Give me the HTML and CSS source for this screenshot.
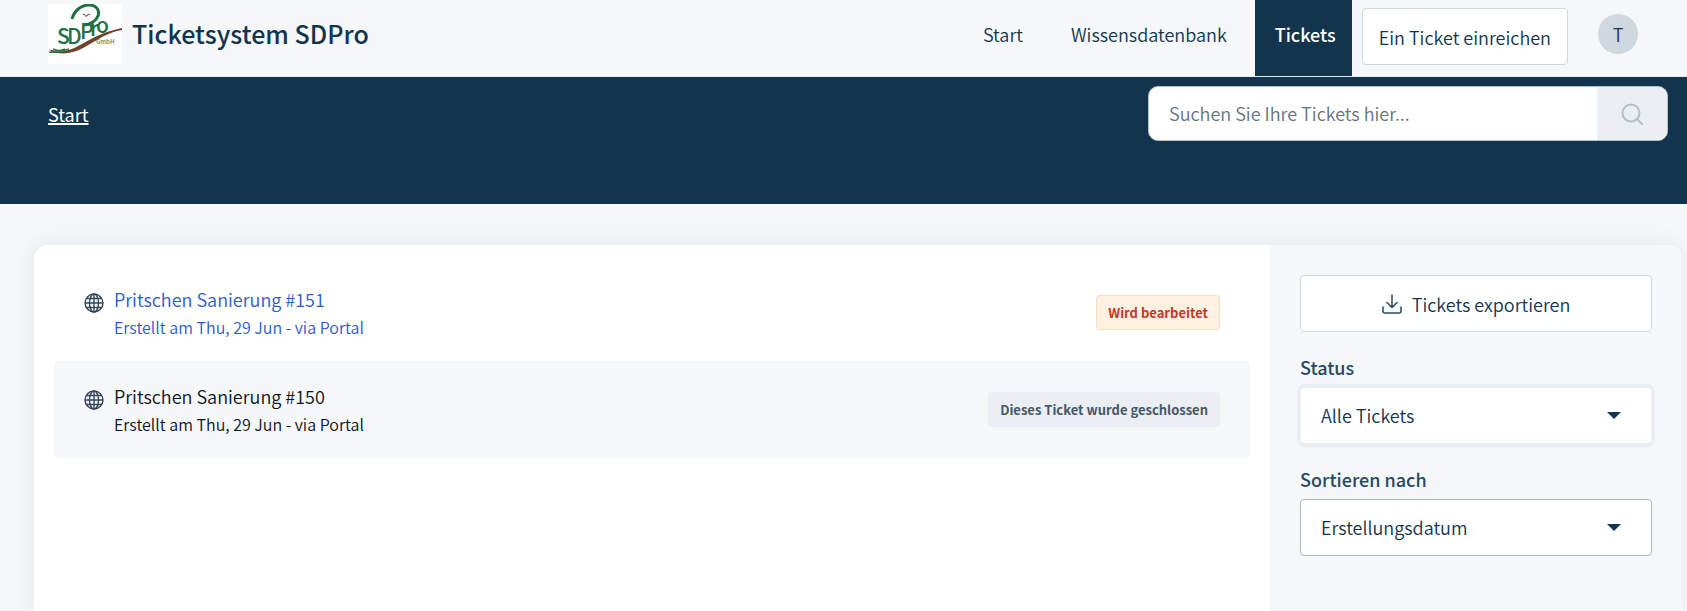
FILE: index.html
```html
<!DOCTYPE html>
<html lang="de">
<head>
  <meta charset="utf-8">
  <meta name="viewport" content="width=device-width, initial-scale=1">
  <title>Ticketsystem SDPro</title>
  <link rel="stylesheet" href="styles.css">
</head>
<body>
  <header class="header">
    <a class="brand" href="#">
      <svg class="brand-logo" viewBox="0 0 74 60" role="img" aria-label="SDPro GmbH">
        <rect width="74" height="60" fill="#fff"/>
        <path d="M24 15C26 7 33 1 41 1c8 0 11 6 9 11-2 5-8 9-14 9" fill="none" stroke="#1f7044" stroke-width="3"/>
        <text class="logo-letters" x="9 19 32 42 48" y="40 40 35 32 29">SDPro</text>
        <path d="M34 10q3-1 4 2 2-3 5-2-3 1-5 3-1-2-4-3z" fill="#6b4a2b"/>
        <path d="M74 24C54 28 43 35 32 41 22 47 12 49 4 46q-2 0-3-1 3 4 8 4 14 2 28-6C51 35 60 28 74 26z" fill="#6f4329"/>
        <path d="M1 48q10 1 20-3M5 45q6 3 12 0" fill="none" stroke="#2f7a4b" stroke-width="1.500"/>
        <text class="logo-sub" x="48" y="40">GmbH</text>
      </svg>
      <span class="brand-name">Ticketsystem SDPro</span>
    </a>
    <nav class="nav" aria-label="Hauptnavigation">
      <a class="nav-link" href="#">Start</a>
      <a class="nav-link" href="#">Wissensdatenbank</a>
      <a class="nav-link nav-link-active" href="#" aria-current="page">Tickets</a>
    </nav>
    <button class="button submit-button" type="button">Ein Ticket einreichen</button>
    <button class="avatar" type="button" aria-label="Profil">T</button>
  </header>

  <section class="banner">
    <a class="breadcrumb" href="#">Start</a>
    <form class="search" role="search">
      <input class="search-input" type="search" placeholder="Suchen Sie Ihre Tickets hier..." aria-label="Suchen Sie Ihre Tickets hier">
      <button class="search-button" type="button" aria-label="Suchen">
        <svg width="22" height="22" viewBox="0 0 22 22" fill="none" stroke="#b3c0cc" stroke-width="2" stroke-linecap="round">
          <circle cx="10" cy="10" r="8.500"/>
          <path d="M16 16l5 5"/>
        </svg>
      </button>
    </form>
  </section>

  <main class="card">
    <ul class="tickets">
      <li>
        <a class="ticket ticket-current" href="#">
          <svg class="globe" viewBox="0 0 20 20"><g fill="none" stroke="#33475b" stroke-width="1.400"><circle cx="10" cy="10" r="9"/><ellipse cx="10" cy="10" rx="4.500" ry="9"/><path d="M10 1v18M1 10h18M2.500 5.500h15M2.500 14.500h15"/></g></svg>
          <span class="ticket-text">
            <span class="ticket-title">Pritschen Sanierung #151</span>
            <span class="ticket-meta">Erstellt am Thu, 29 Jun - via Portal</span>
          </span>
          <span class="badge badge-open">Wird bearbeitet</span>
        </a>
      </li>
      <li>
        <a class="ticket ticket-shaded" href="#">
          <svg class="globe" viewBox="0 0 20 20"><g fill="none" stroke="#33475b" stroke-width="1.400"><circle cx="10" cy="10" r="9"/><ellipse cx="10" cy="10" rx="4.500" ry="9"/><path d="M10 1v18M1 10h18M2.500 5.500h15M2.500 14.500h15"/></g></svg>
          <span class="ticket-text">
            <span class="ticket-title">Pritschen Sanierung #150</span>
            <span class="ticket-meta">Erstellt am Thu, 29 Jun - via Portal</span>
          </span>
          <span class="badge badge-closed">Dieses Ticket wurde geschlossen</span>
        </a>
      </li>
    </ul>
    <aside class="sidebar">
      <button class="button export-button" type="button">
        <svg width="20" height="20" viewBox="0 0 20 20" fill="none" stroke="#264966" stroke-width="1.500" stroke-linecap="round" stroke-linejoin="round">
          <path d="M10 1v12M5 8.500l5 5 5-5M1 13v4q0 2 2 2h14q2 0 2-2v-4"/>
        </svg>
        Tickets exportieren
      </button>
      <div class="field">
        <label class="field-label" for="status">Status</label>
        <div class="select-box">
          <select class="select select-focused" id="status"><option>Alle Tickets</option></select>
          <svg class="caret" width="14" height="7" viewBox="0 0 14 7"><path d="M0 0h14L7 7z" fill="#12344d"/></svg>
        </div>
      </div>
      <div class="field">
        <label class="field-label" for="sort">Sortieren nach</label>
        <div class="select-box">
          <select class="select" id="sort"><option>Erstellungsdatum</option></select>
          <svg class="caret" width="14" height="7" viewBox="0 0 14 7"><path d="M0 0h14L7 7z" fill="#12344d"/></svg>
        </div>
      </div>
    </aside>
  </main>
</body>
</html>
```

FILE: styles.css
```css
* {
  box-sizing: border-box;
}

body {
  margin: 0;
  min-height: 100vh;
  display: flex;
  flex-direction: column;
  background: #f5f7f9;
  color: #12344d;
  font-family: "Noto Sans CJK SC", "Open Sans", sans-serif;
  font-size: 18px;
  font-weight: 350;
  line-height: 28px;
  overflow-x: hidden;
}

a {
  color: inherit;
  text-decoration: none;
}

button,
input,
select {
  font: inherit;
  color: inherit;
}

button {
  cursor: pointer;
}

.header {
  display: flex;
  height: 77px;
  padding: 0 49px 0 48px;
  border-bottom: 1px solid #ebeef2;
}

.brand {
  display: flex;
  align-items: flex-start;
  align-self: flex-start;
  gap: 10px;
  margin-right: auto;
  padding-top: 4px;
}

.brand-logo {
  width: 74px;
  height: 60px;
}

.logo-letters {
  fill: #1f7044;
  font-size: 21px;
  font-weight: 500;
}

.logo-sub {
  fill: #73997f;
  font-size: 6px;
  font-weight: 700;
}

.brand-name {
  font-size: 25px;
  font-weight: 500;
  line-height: 58px;
}

.nav {
  display: flex;
  gap: 12px;
  margin-right: 10px;
}

.nav-link {
  padding: 20px 16px 18px 20px;
}

.nav-link-active {
  background: #12344d;
  color: #fff;
  font-weight: 500;
}

.button {
  height: 57px;
  border: 1px solid #cfd7df;
  border-radius: 4px;
  background: #fff;
}

.submit-button {
  margin: 8px 30px 0 0;
  padding: 0 16px;
}

.avatar {
  width: 40px;
  height: 40px;
  margin-top: 14px;
  padding: 0;
  border: 0;
  border-radius: 50%;
  background: #cfd7df;
}

.banner {
  display: flex;
  align-items: flex-start;
  justify-content: space-between;
  height: 127px;
  padding: 9px 19px 0 48px;
  background: #12344d;
}

.breadcrumb {
  margin-top: 14px;
  color: #fff;
  font-weight: 400;
  text-decoration: underline;
  text-decoration-thickness: 2px;
}

.search {
  display: flex;
  width: 520px;
  height: 55px;
  overflow: hidden;
  border: 1px solid #b3c0cc;
  border-radius: 10px;
  background: #fff;
}

.search-input {
  flex: 1;
  min-width: 0;
  padding: 0 20px 1px;
  border: 0;
  outline: 0;
  background: none;
}

.search-input::placeholder {
  color: #647380;
  opacity: 1;
}

.search-button {
  display: grid;
  place-items: center;
  width: 70px;
  padding: 0;
  border: 0;
  background: #ebeef2;
}

.card {
  display: flex;
  flex: 1 0 366px;
  margin: 41px 5px 0 34px;
  overflow: hidden;
  border-radius: 14px 14px 0 0;
  background: #fff;
  box-shadow: 0 0 24px 4px rgba(18, 30, 50, 0.05);
}

.tickets {
  flex: 1;
  margin: 0;
  padding: 19px 20px 0;
  list-style: none;
}

.ticket {
  display: flex;
  align-items: center;
  gap: 10px;
  padding: 20px 30px 21px;
  border-radius: 4px;
  color: #0b151d;
}

.ticket-current {
  color: #2c5cc5;
}

.ticket-shaded {
  background: #f5f7f9;
}

.globe {
  align-self: flex-start;
  width: 20px;
  height: 20px;
  margin-top: 9px;
}

.ticket-text {
  display: flex;
  flex: 1;
  flex-direction: column;
}

.ticket-title {
  line-height: 30px;
}

.ticket-meta {
  font-size: 16px;
  line-height: 26px;
}

.badge {
  padding: 4px 11px;
  border: 1px solid;
  border-radius: 4px;
  font-size: 13px;
  font-weight: 700;
  line-height: 25px;
}

.badge-open {
  border-color: #fedcb8;
  background: #fef1e1;
  color: #c0392b;
}

.badge-closed {
  border-color: #ebeef2;
  background: #ebeef2;
  color: #475867;
}

.sidebar {
  display: flex;
  flex-direction: column;
  width: 412px;
  padding: 30px;
  background: #f5f7f9;
}

.export-button {
  display: flex;
  align-items: center;
  justify-content: center;
  gap: 10px;
}

.field {
  display: flex;
  flex-direction: column;
  gap: 6px;
  margin-top: 21px;
}

.field-label {
  color: #264966;
  font-weight: 500;
}

.select-box {
  display: grid;
  align-items: center;
}

.select {
  grid-area: 1 / 1;
  height: 57px;
  padding: 0 20px 2px;
  border: 1px solid #aab8c6;
  border-radius: 4px;
  appearance: none;
  background: #fff;
}

.select-focused {
  border-color: #ebeef2;
  box-shadow: 0 0 0 3px #ebeef4;
}

.caret {
  grid-area: 1 / 1;
  justify-self: end;
  margin-right: 31px;
  pointer-events: none;
}
```
